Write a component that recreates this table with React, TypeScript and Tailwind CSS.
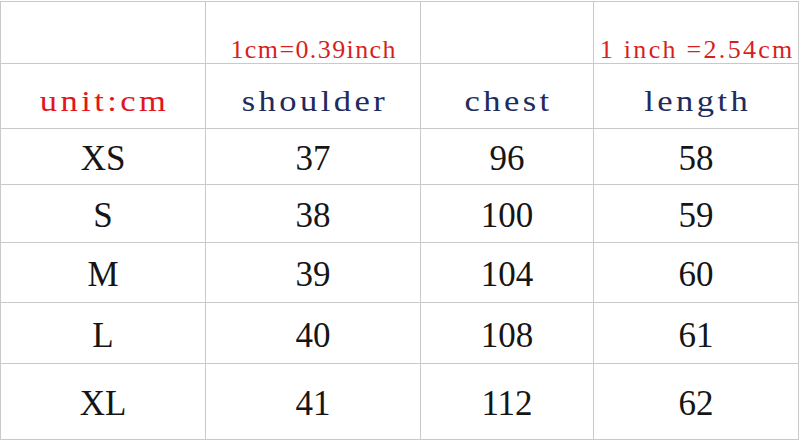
const rows = [
  { size: 'XS', shoulder: 37, chest: 96, length: 58, h: 'h-[56px]' },
  { size: 'S', shoulder: 38, chest: 100, length: 59, h: 'h-[58px]' },
  { size: 'M', shoulder: 39, chest: 104, length: 60, h: 'h-[60px]' },
  { size: 'L', shoulder: 40, chest: 108, length: 61, h: 'h-[61px]' },
  { size: 'XL', shoulder: 41, chest: 112, length: 62, h: 'h-[76px]' },
]

const cell = 'flex items-center justify-center border-r border-b border-[#c9c9c9] whitespace-nowrap'
const serif = { fontFamily: '"Liberation Serif", "Times New Roman", serif' }
// header words: SimSun-like wide glyphs, so stretch the serif a little
const head = 'inline-block scale-x-[1.15] text-[30px] tracking-[3px] pl-[3px]'

export default function App() {
  return (
    <div className="w-[800px] h-[442px] bg-white pt-px overflow-hidden">
      <div className="grid grid-cols-[205px_215px_173px_205px] border-t border-l border-[#c9c9c9] w-[799px]">
        {/* conversion notes */}
        <div className={`${cell} h-[62px]`} />
        <div className={`${cell} h-[62px] items-end`}>
          <span className="text-[26px] leading-none tracking-[1.4px] pl-[1.4px] text-[#d61f1f]" style={serif}>1cm=0.39inch</span>
        </div>
        <div className={`${cell} h-[62px]`} />
        <div className={`${cell} h-[62px] items-end`}>
          <span className="text-[26px] leading-none tracking-[2.3px] pl-[2.3px] text-[#d61f1f]" style={serif}>1 inch =2.54cm</span>
        </div>

        {/* header */}
        <div className={`${cell} h-[65px] pt-[9px]`}>
          <span className={`${head} text-[#e3161d]`} style={serif}>unit:cm</span>
        </div>
        {['shoulder', 'chest', 'length'].map((t) => (
          <div key={t} className={`${cell} h-[65px] pt-[9px]`}>
            <span className={`${head} text-[#1d2c5c]`} style={serif}>{t}</span>
          </div>
        ))}

        {rows.map((r) => (
          <>
            <div key={r.size} className={`${cell} ${r.h} pt-[6px]`}>
              <span className="text-[35px] text-[#151515]" style={serif}>{r.size}</span>
            </div>
            <div className={`${cell} ${r.h} pt-[6px]`}>
              <span className="text-[35px] text-[#151515]" style={serif}>{r.shoulder}</span>
            </div>
            <div className={`${cell} ${r.h} pt-[6px]`}>
              <span className="text-[35px] text-[#151515]" style={serif}>{r.chest}</span>
            </div>
            <div className={`${cell} ${r.h} pt-[6px]`}>
              <span className="text-[35px] text-[#151515]" style={serif}>{r.length}</span>
            </div>
          </>
        ))}
      </div>
    </div>
  )
}
